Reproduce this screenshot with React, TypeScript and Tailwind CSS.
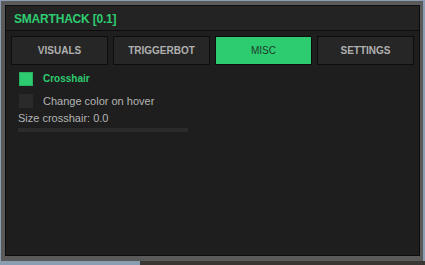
import React from "react";

const tabs = ["VISUALS", "TRIGGERBOT", "MISC", "SETTINGS"];

export default function App() {
  return (
    <div
      className="w-[425px] h-[265px] bg-[#8b9db0] relative overflow-hidden pt-[1px] pl-[1px]"
      style={{ fontFamily: '"Liberation Sans", Arial, sans-serif' }}
    >
      <div className="absolute left-[140px] right-0 bottom-0 h-[4px] bg-[#3a3634]" />
      <div className="relative w-[422px] h-[260px] bg-[#5a5a5a] border-l-[4px] border-t-[4px] border-r-[3px] border-b-[5px] border-[#5a5a5a] border-solid">
        <div className="w-full h-full border border-[#0d0d0d] flex flex-col bg-[#1e1e1e]">
          <div className="h-[25px] shrink-0 bg-[#232323] border-b border-[#0d0d0d] flex items-center pl-[8px]">
            <span className="text-[12px] font-bold text-[#2ecc71] leading-none mt-[2px] tracking-[-0.2px]">
              SMARTHACK [0.1]
            </span>
          </div>
          <div className="flex-1 px-[5px] pt-[5px]">
            <div className="flex gap-[5px] h-[29px]">
              {tabs.map((t) => {
                const active = t === "MISC";
                return (
                  <div
                    key={t}
                    className={
                      active
                        ? "flex-1 flex items-center justify-center border border-[#0d0d0d] bg-[#2ecc71] text-[#1c3a28] text-[10px] leading-none"
                        : "flex-1 flex items-center justify-center border border-[#0d0d0d] bg-[#262626] text-[#b0b0b0] text-[10px] font-bold leading-none"
                    }
                  >
                    {t}
                  </div>
                );
              })}
            </div>
            <div className="pl-[8px] pt-[7px]">
              <div className="flex items-center h-[14px]">
                <div className="w-[14px] h-[14px] bg-[#2ecc71] border border-[#27b060]" />
                <span className="ml-[10px] text-[10px] font-bold text-[#2ecc71] leading-none">
                  Crosshair
                </span>
              </div>
              <div className="flex items-center h-[14px] mt-[8px]">
                <div className="w-[14px] h-[14px] bg-[#2a2a2a]" />
                <span className="ml-[10px] text-[11px] text-[#b4b4b4] leading-none">
                  Change color on hover
                </span>
              </div>
              <div className="ml-[-1px] mt-[5px] h-[11px] flex items-center">
                <span className="text-[11px] text-[#b4b4b4] leading-none">Size crosshair: 0.0</span>
              </div>
              <div className="ml-[-1px] mt-[4px] w-[170px] h-[4px] bg-[#2b2b2b]" />
            </div>
          </div>
        </div>
      </div>
    </div>
  );
}
